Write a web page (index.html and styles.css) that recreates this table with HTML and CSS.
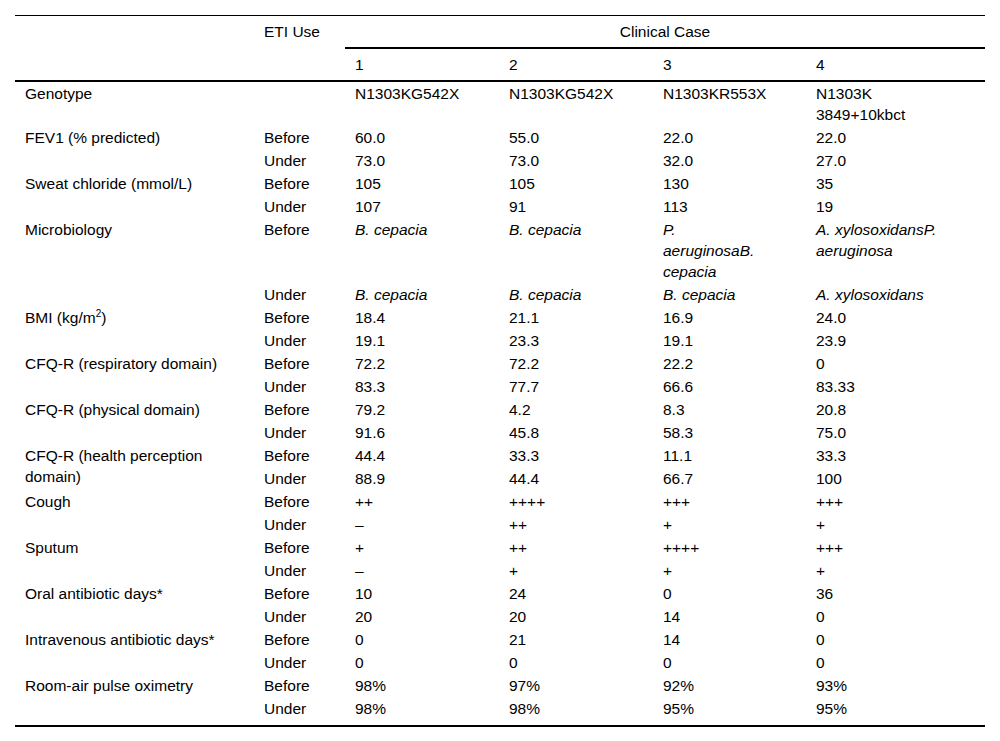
FILE: index.html
```html
<!DOCTYPE html>
<html>
<head>
<meta charset="utf-8">
<link rel="stylesheet" href="styles.css">
</head>
<body>
<table class="data">
<colgroup>
<col class="c0"><col class="c1"><col class="c2"><col class="c3"><col class="c4"><col class="c5">
</colgroup>
<thead>
<tr class="h1">
<th></th>
<th>ETI Use</th>
<th colspan="4" class="group">Clinical Case</th>
</tr>
<tr class="h2">
<th></th>
<th></th>
<th>1</th><th>2</th><th>3</th><th>4</th>
</tr>
</thead>
<tbody>
<tr><td>Genotype</td><td></td><td>N1303KG542X</td><td>N1303KG542X</td><td>N1303KR553X</td><td>N1303K<br>3849+10kbct</td></tr>
<tr><td rowspan="2">FEV1 (% predicted)</td><td>Before</td><td>60.0</td><td>55.0</td><td>22.0</td><td>22.0</td></tr>
<tr><td>Under</td><td>73.0</td><td>73.0</td><td>32.0</td><td>27.0</td></tr>
<tr><td rowspan="2">Sweat chloride (mmol/L)</td><td>Before</td><td>105</td><td>105</td><td>130</td><td>35</td></tr>
<tr><td>Under</td><td>107</td><td>91</td><td>113</td><td>19</td></tr>
<tr><td rowspan="2">Microbiology</td><td>Before</td><td><i>B. cepacia</i></td><td><i>B. cepacia</i></td><td><i>P.<br>aeruginosaB.<br>cepacia</i></td><td><i>A. xylosoxidansP.<br>aeruginosa</i></td></tr>
<tr><td>Under</td><td><i>B. cepacia</i></td><td><i>B. cepacia</i></td><td><i>B. cepacia</i></td><td><i>A. xylosoxidans</i></td></tr>
<tr><td rowspan="2">BMI (kg/m<sup>2</sup>)</td><td>Before</td><td>18.4</td><td>21.1</td><td>16.9</td><td>24.0</td></tr>
<tr><td>Under</td><td>19.1</td><td>23.3</td><td>19.1</td><td>23.9</td></tr>
<tr><td rowspan="2">CFQ-R (respiratory domain)</td><td>Before</td><td>72.2</td><td>72.2</td><td>22.2</td><td>0</td></tr>
<tr><td>Under</td><td>83.3</td><td>77.7</td><td>66.6</td><td>83.33</td></tr>
<tr><td rowspan="2">CFQ-R (physical domain)</td><td>Before</td><td>79.2</td><td>4.2</td><td>8.3</td><td>20.8</td></tr>
<tr><td>Under</td><td>91.6</td><td>45.8</td><td>58.3</td><td>75.0</td></tr>
<tr><td rowspan="2">CFQ-R (health perception<br>domain)</td><td>Before</td><td>44.4</td><td>33.3</td><td>11.1</td><td>33.3</td></tr>
<tr><td>Under</td><td>88.9</td><td>44.4</td><td>66.7</td><td>100</td></tr>
<tr><td rowspan="2">Cough</td><td>Before</td><td>++</td><td>++++</td><td>+++</td><td>+++</td></tr>
<tr><td>Under</td><td>–</td><td>++</td><td>+</td><td>+</td></tr>
<tr><td rowspan="2">Sputum</td><td>Before</td><td>+</td><td>++</td><td>++++</td><td>+++</td></tr>
<tr><td>Under</td><td>–</td><td>+</td><td>+</td><td>+</td></tr>
<tr><td rowspan="2">Oral antibiotic days*</td><td>Before</td><td>10</td><td>24</td><td>0</td><td>36</td></tr>
<tr><td>Under</td><td>20</td><td>20</td><td>14</td><td>0</td></tr>
<tr><td rowspan="2">Intravenous antibiotic days*</td><td>Before</td><td>0</td><td>21</td><td>14</td><td>0</td></tr>
<tr><td>Under</td><td>0</td><td>0</td><td>0</td><td>0</td></tr>
<tr><td rowspan="2">Room-air pulse oximetry</td><td>Before</td><td>98%</td><td>97%</td><td>92%</td><td>93%</td></tr>
<tr class="last"><td>Under</td><td>98%</td><td>98%</td><td>95%</td><td>95%</td></tr>
</tbody>
</table>
</body>
</html>
```
FILE: styles.css
```css
html, body {
  margin: 0;
  padding: 0;
  background: #fff;
}
body {
  padding: 15px 15px 0 15px;
  font-family: "Liberation Sans", Arial, sans-serif;
  font-size: 15.5px;
  color: #000;
}
.data {
  width: 970px;
  border-collapse: collapse;
  table-layout: fixed;
  border-top: 1px solid #000;
  border-bottom: 2px solid #000;
}
.c0 { width: 239px; }
.c1 { width: 91px; }
.c2 { width: 154px; }
.c3 { width: 154px; }
.c4 { width: 153px; }
.c5 { width: 179px; }
th, td {
  text-align: left;
  vertical-align: top;
  line-height: 21px;
  padding: 1px 10px;
  font-weight: normal;
}
thead th {
  padding: 5px 10px 5px 10px;
}
.h1 .group {
  text-align: center;
  border-bottom: 2px solid #000;
}
.h2 th {
  border-bottom: 2px solid #000;
}
.last td {
  padding-bottom: 6px;
}
sup {
  font-size: 10px;
  line-height: 0;
}
i {
  font-style: italic;
}
```
